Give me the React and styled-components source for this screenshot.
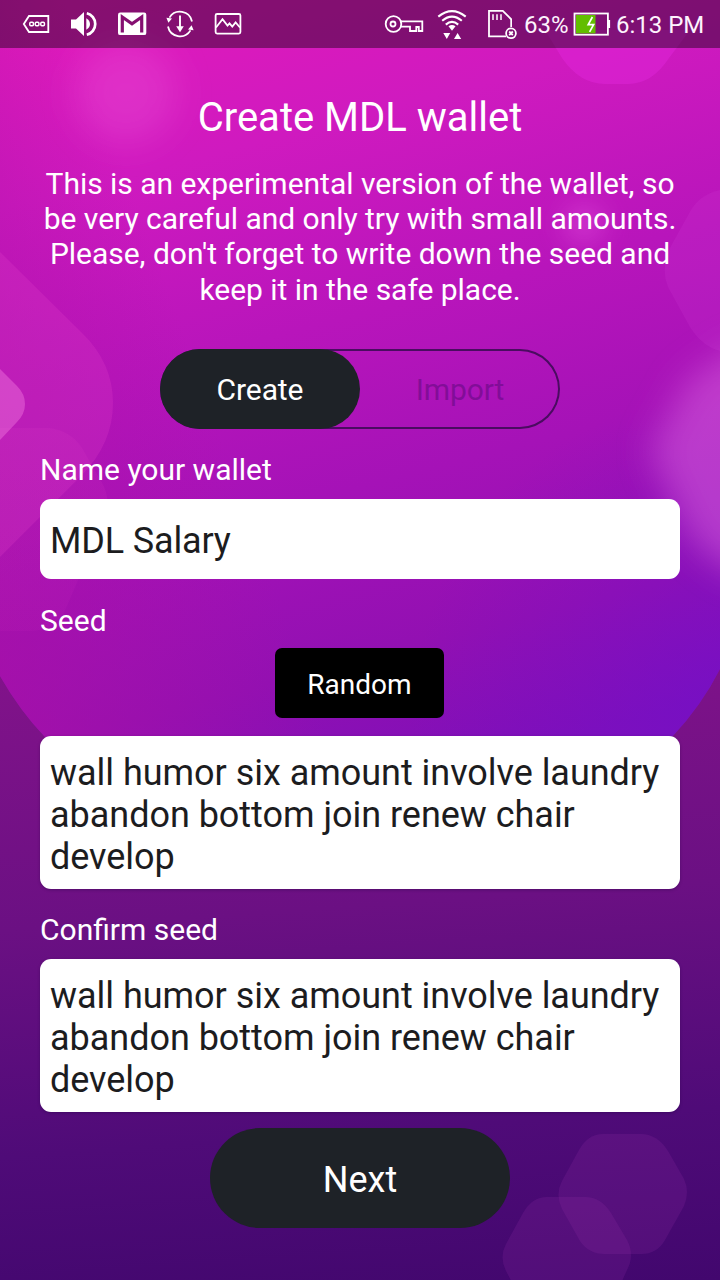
import React from "react";
import styled, { createGlobalStyle } from "styled-components";

const GlobalStyle = createGlobalStyle`
  * { box-sizing: border-box; }
  body { margin: 0; }
  button, input, textarea { font: inherit; }
`;

const Screen = styled.div`
  position: relative;
  width: 720px;
  height: 1280px;
  overflow: hidden;
  font-family: Roboto, "Liberation Sans", sans-serif;
  color: #fff;
  background: linear-gradient(176deg, #82138a 50%, #6b1083 70%, #4f0b78 87%, #42076e 100%);
`;

const Backdrop = styled.svg`
  position: absolute;
  inset: 0;
`;

const StatusBar = styled.header`
  position: relative;
  display: flex;
  align-items: center;
  justify-content: space-between;
  height: 48px;
  padding: 0 16px 0 20px;
  background: rgba(0, 0, 0, 0.4);
`;

const StatusGroup = styled.div`
  display: flex;
  align-items: center;
  gap: ${(p) => p.$gap || 0}px;
  height: 48px;
`;

const StatusIcon = styled.svg`
  display: block;
  flex: none;
  fill: none;
  stroke: #fff;
  stroke-width: 1.8;
`;

const StatusText = styled.span`
  width: ${(p) => p.$width}px;
  font-size: 24px;
  line-height: 30px;
  padding-top: 2px;
  white-space: nowrap;
  color: #fdf3fd;
`;

const Form = styled.main`
  position: relative;
  display: flex;
  flex-direction: column;
  padding: 46px 40px 0;
`;

const Title = styled.h1`
  margin: 0;
  font-size: 40px;
  font-weight: 400;
  line-height: 47px;
  text-align: center;
`;

const Notice = styled.p`
  margin: 25px -20px 0;
  font-size: 30px;
  line-height: 35.2px;
  letter-spacing: -0.02px;
  text-align: center;
`;

const Toggle = styled.div`
  display: flex;
  align-self: center;
  width: 400px;
  height: 80px;
  margin-top: 42px;
  border-radius: 40px;
  box-shadow: inset 0 0 0 2px #4a0c60;
`;

const ToggleOption = styled.button`
  flex: 1;
  padding: 2px 0 0;
  border: 0;
  border-radius: 40px;
  font-size: 30px;
  letter-spacing: -0.1px;
  background: ${(p) => (p.$active ? "#1e2227" : "transparent")};
  color: ${(p) => (p.$active ? "#fff" : "rgba(88, 8, 120, 0.5)")};
`;

const Label = styled.label`
  margin-top: ${(p) => p.$top}px;
  font-size: 30px;
  line-height: 35px;
`;

const NameInput = styled.input`
  height: 80px;
  margin-top: 12px;
  padding: 4px 10px 0;
  border: 0;
  border-radius: 11px;
  font-size: 36px;
  letter-spacing: -0.15px;
  background: #fff;
  color: #1c1c1e;
`;

const SeedInput = styled.textarea`
  height: 153px;
  margin-top: ${(p) => p.$top}px;
  padding: 16px 10px 0;
  border: 0;
  border-radius: 11px;
  font-size: 36px;
  line-height: 42.2px;
  letter-spacing: -0.03px;
  resize: none;
  overflow: hidden;
  background: #fff;
  color: #1c1c1e;
  box-shadow: 0 1px 3px rgba(30, 0, 60, 0.35);
`;

const RandomButton = styled.button`
  align-self: center;
  width: 169px;
  height: 70px;
  margin: 10px 1px 0 0;
  padding: 4px 0 0;
  border: 0;
  border-radius: 7px;
  font-size: 28px;
  background: #000;
  color: #fff;
`;

const NextButton = styled.button`
  align-self: center;
  width: 300px;
  height: 100px;
  margin-top: 16px;
  padding: 4px 0 0;
  border: 0;
  border-radius: 50px;
  font-size: 36px;
  background: #1e2227;
  color: #fff;
`;

const SEED = "wall humor six amount involve laundry abandon bottom join renew chair develop";

function BackdropArt() {
  return (
    <Backdrop width="720" height="1280" viewBox="0 0 720 1280">
      <defs>
        <linearGradient id="glow" gradientUnits="userSpaceOnUse" x1="110" y1="-10" x2="320" y2="800">
          <stop offset="0" stopColor="#e21abb" />
          <stop offset="0.22" stopColor="#cf1abf" />
          <stop offset="0.45" stopColor="#b815bb" />
          <stop offset="0.65" stopColor="#a512b7" />
          <stop offset="0.85" stopColor="#9210b2" />
          <stop offset="1" stopColor="#800fb8" />
        </linearGradient>
        <radialGradient id="blueSide" gradientUnits="userSpaceOnUse" cx="740" cy="720" r="330">
          <stop offset="0" stopColor="#7010cc" stopOpacity="0.6" />
          <stop offset="0.5" stopColor="#7010cc" stopOpacity="0.26" />
          <stop offset="1" stopColor="#7010cc" stopOpacity="0" />
        </radialGradient>
        <linearGradient id="warmSide" gradientUnits="userSpaceOnUse" x1="0" y1="700" x2="280" y2="600">
          <stop offset="0" stopColor="#a810a6" stopOpacity="0.7" />
          <stop offset="1" stopColor="#a810a6" stopOpacity="0" />
        </linearGradient>
        <linearGradient id="hex" gradientUnits="userSpaceOnUse" x1="0" y1="420" x2="0" y2="635">
          <stop offset="0" stopColor="#e040c8" stopOpacity="0.14" />
          <stop offset="1" stopColor="#d028c0" stopOpacity="0.1" />
        </linearGradient>
        <filter id="softLarge" x="-60%" y="-60%" width="220%" height="220%">
          <feGaussianBlur stdDeviation="17" />
        </filter>
        <filter id="softSmall" x="-80%" y="-80%" width="260%" height="260%">
          <feGaussianBlur stdDeviation="12" />
        </filter>
        <clipPath id="blob">
          <path d="M0 0H720V669Q702 705 672 737Q590 850 355 850Q130 850 45 737Q20 711 0 676Z" />
        </clipPath>
      </defs>
      <g clipPath="url(#blob)">
        <rect width="720" height="860" fill="url(#glow)" />
        <rect width="720" height="860" fill="url(#blueSide)" />
        <rect width="720" height="860" fill="url(#warmSide)" />
        <path d="M0 252L82 333Q113 363 113 403Q113 443 82 475L0 557Z" fill="#ea45cc" fillOpacity="0.22" />
        <path d="M-20 428H48Q70 430 82 448L102 483Q112 500 103 521L67 606Q56 631 30 631H-20Z" fill="url(#hex)" />
        <path d="M0 369L17 386Q25 394 25 404Q25 414 17 422L0 440Z" fill="#f27be0" fillOpacity="0.42" />
        <path d="M545 30L562 58Q580 84 605 84H628Q652 84 669 58L690 30Z" fill="#e82be5" fillOpacity="0.35" />
        <path d="M720 190Q701 194 691 210L671 246Q660 267 668 287L690 327Q702 346 720 351Z" fill="#d545da" fillOpacity="0.16" />
        <circle cx="126" cy="92" r="50" fill="#f065e2" fillOpacity="0.28" filter="url(#softLarge)" />
        <circle cx="584" cy="224" r="21" fill="#ee60e8" fillOpacity="0.34" filter="url(#softSmall)" />
        <path d="M650 450L688 380L740 345H820V575H740Q698 555 684 525Z" fill="#d963df" fillOpacity="0.5" filter="url(#softLarge)" />
      </g>
      <g fill="#9c32aa" fillOpacity="0.18">
        <path d="M603 1134H641Q657 1134 668 1151L684 1179Q690 1192 684 1206L665 1240Q657 1254 641 1254H605Q589 1254 580 1241L562 1209Q555 1194 562 1181L579 1150Q588 1134 603 1134Z" />
        <path d="M547 1197H585Q601 1197 611 1213L627 1240Q635 1255 627 1270L618 1290H516L506 1271Q499 1257 506 1244L523 1213Q532 1197 547 1197Z" />
      </g>
    </Backdrop>
  );
}

function NotificationIcons() {
  return (
    <StatusGroup $gap={16}>
      <StatusIcon width="32" height="32" viewBox="20 8 32 32">
        <path d="M29 16H48.3V32H29L23.8 24Z" />
        <g strokeWidth="1.5">
          <rect x="29.8" y="22.2" width="3.6" height="3.6" rx="1" />
          <rect x="35.3" y="22.2" width="3.6" height="3.6" rx="1" />
          <rect x="40.8" y="22.2" width="3.6" height="3.6" rx="1" />
        </g>
      </StatusIcon>
      <StatusIcon width="32" height="32" viewBox="68 8 32 32">
        <path d="M71 19.5H76L84 12V36L76 28.5H71Z" fill="#fff" stroke="none" />
        <path d="M86.3 18.2Q90 20.5 90 24Q90 27.5 86.3 29.8Z" fill="#fff" stroke="none" />
        <path d="M86.8 13.3A11 11 0 0 1 86.8 34.7" strokeWidth="2.7" />
      </StatusIcon>
      <StatusIcon width="32" height="32" viewBox="116 8 32 32">
        <rect x="118" y="12.5" width="28.3" height="22.6" rx="2.2" fill="#fff" stroke="none" />
        <path d="M122.3 32.5V17L132 23.8L141.7 17V32.5" stroke="#850f71" strokeWidth="3.2" />
      </StatusIcon>
      <StatusIcon width="32" height="32" viewBox="164 8 32 32">
        <path d="M169.5 17.6A12.3 12.3 0 0 1 192 21.5M190.5 30.4A12.3 12.3 0 0 1 168 26.5" />
        <path d="M166.4 17.8L172 18.5L168.4 22.8ZM193.6 30.2L188 29.5L191.6 25.2Z" fill="#fff" stroke="none" />
        <path d="M180 15.5V27" strokeWidth="1.9" />
        <path d="M176.2 26.3H183.8L180 32.3Z" fill="#fff" stroke="none" />
      </StatusIcon>
      <StatusIcon width="32" height="32" viewBox="212 8 32 32">
        <rect x="215.6" y="14" width="24.8" height="19.6" rx="1.5" />
        <path d="M216 27.5L222.5 19.3L227.5 25.5L229.5 23.3L232.3 26.6L235.6 22.4L240 27.5" />
      </StatusIcon>
    </StatusGroup>
  );
}

function SystemIcons() {
  return (
    <StatusGroup>
      <StatusIcon width="54" height="48" viewBox="382 0 54 48">
        <circle cx="393.5" cy="24" r="7.8" />
        <circle cx="393" cy="24" r="2.5" />
        <path d="M400.5 21.3H422.3V31H418.8V27H416.3V31H410V26.7H400.5" />
      </StatusIcon>
      <StatusIcon width="76" height="48" viewBox="436 0 76 48">
        <g strokeWidth="2.1">
          <path d="M438.3 16.6Q452 5.5 465.7 16.6" />
          <path d="M442.2 20.7Q452 12.5 461.8 20.7" />
          <path d="M445.8 24.6Q452 19.3 458.2 24.6" />
        </g>
        <g fill="#fff" stroke="none">
          <path d="M448.5 26.2Q452 23.8 455.5 26.2L452 30.8Z" />
          <path d="M443.3 33H450.2L446.8 39ZM454 39H461.2L457.6 33Z" />
        </g>
        <path d="M506 36.3H489V10.8H502.8L511.2 19.3V27" />
        <path d="M493 14.3V20M497 14.3V20M501 14.3V20" strokeWidth="1.5" />
      </StatusIcon>
      <StatusIcon width="12" height="48" viewBox="512 0 12 48" overflow="visible">
        <circle cx="511" cy="33.3" r="4.9" />
        <path d="M509.2 31.5L512.8 35.1M512.8 31.5L509.2 35.1" />
      </StatusIcon>
      <StatusText $width={49}>63%</StatusText>
      <StatusIcon width="43" height="48" viewBox="573 0 43 48">
        <rect x="574.5" y="13.5" width="33.4" height="21.2" />
        <rect x="576" y="15" width="19.5" height="18.4" fill="#62bd00" stroke="none" />
        <path d="M608.8 20V28" strokeWidth="2.6" />
        <path d="M592.4 17L588.2 24.6H593.6L589.6 31.8" strokeWidth="1.7" />
      </StatusIcon>
      <StatusText $width={88}>6:13 PM</StatusText>
    </StatusGroup>
  );
}

export default function App() {
  return (
    <>
      <GlobalStyle />
      <Screen>
        <BackdropArt />
        <StatusBar>
          <NotificationIcons />
          <SystemIcons />
        </StatusBar>
        <Form>
          <Title>Create MDL wallet</Title>
          <Notice>
            This is an experimental version of the wallet, so
            <br />
            be very careful and only try with small amounts.
            <br />
            Please, don't forget to write down the seed and
            <br />
            keep it in the safe place.
          </Notice>
          <Toggle>
            <ToggleOption $active>Create</ToggleOption>
            <ToggleOption>Import</ToggleOption>
          </Toggle>
          <Label $top={23} htmlFor="name">Name your wallet</Label>
          <NameInput id="name" defaultValue="MDL Salary" />
          <Label $top={24} htmlFor="seed">Seed</Label>
          <RandomButton>Random</RandomButton>
          <SeedInput $top={18} id="seed" spellCheck={false} defaultValue={SEED} />
          <Label $top={23} htmlFor="confirm">Confirm seed</Label>
          <SeedInput $top={12} id="confirm" spellCheck={false} defaultValue={SEED} />
          <NextButton>Next</NextButton>
        </Form>
      </Screen>
    </>
  );
}
